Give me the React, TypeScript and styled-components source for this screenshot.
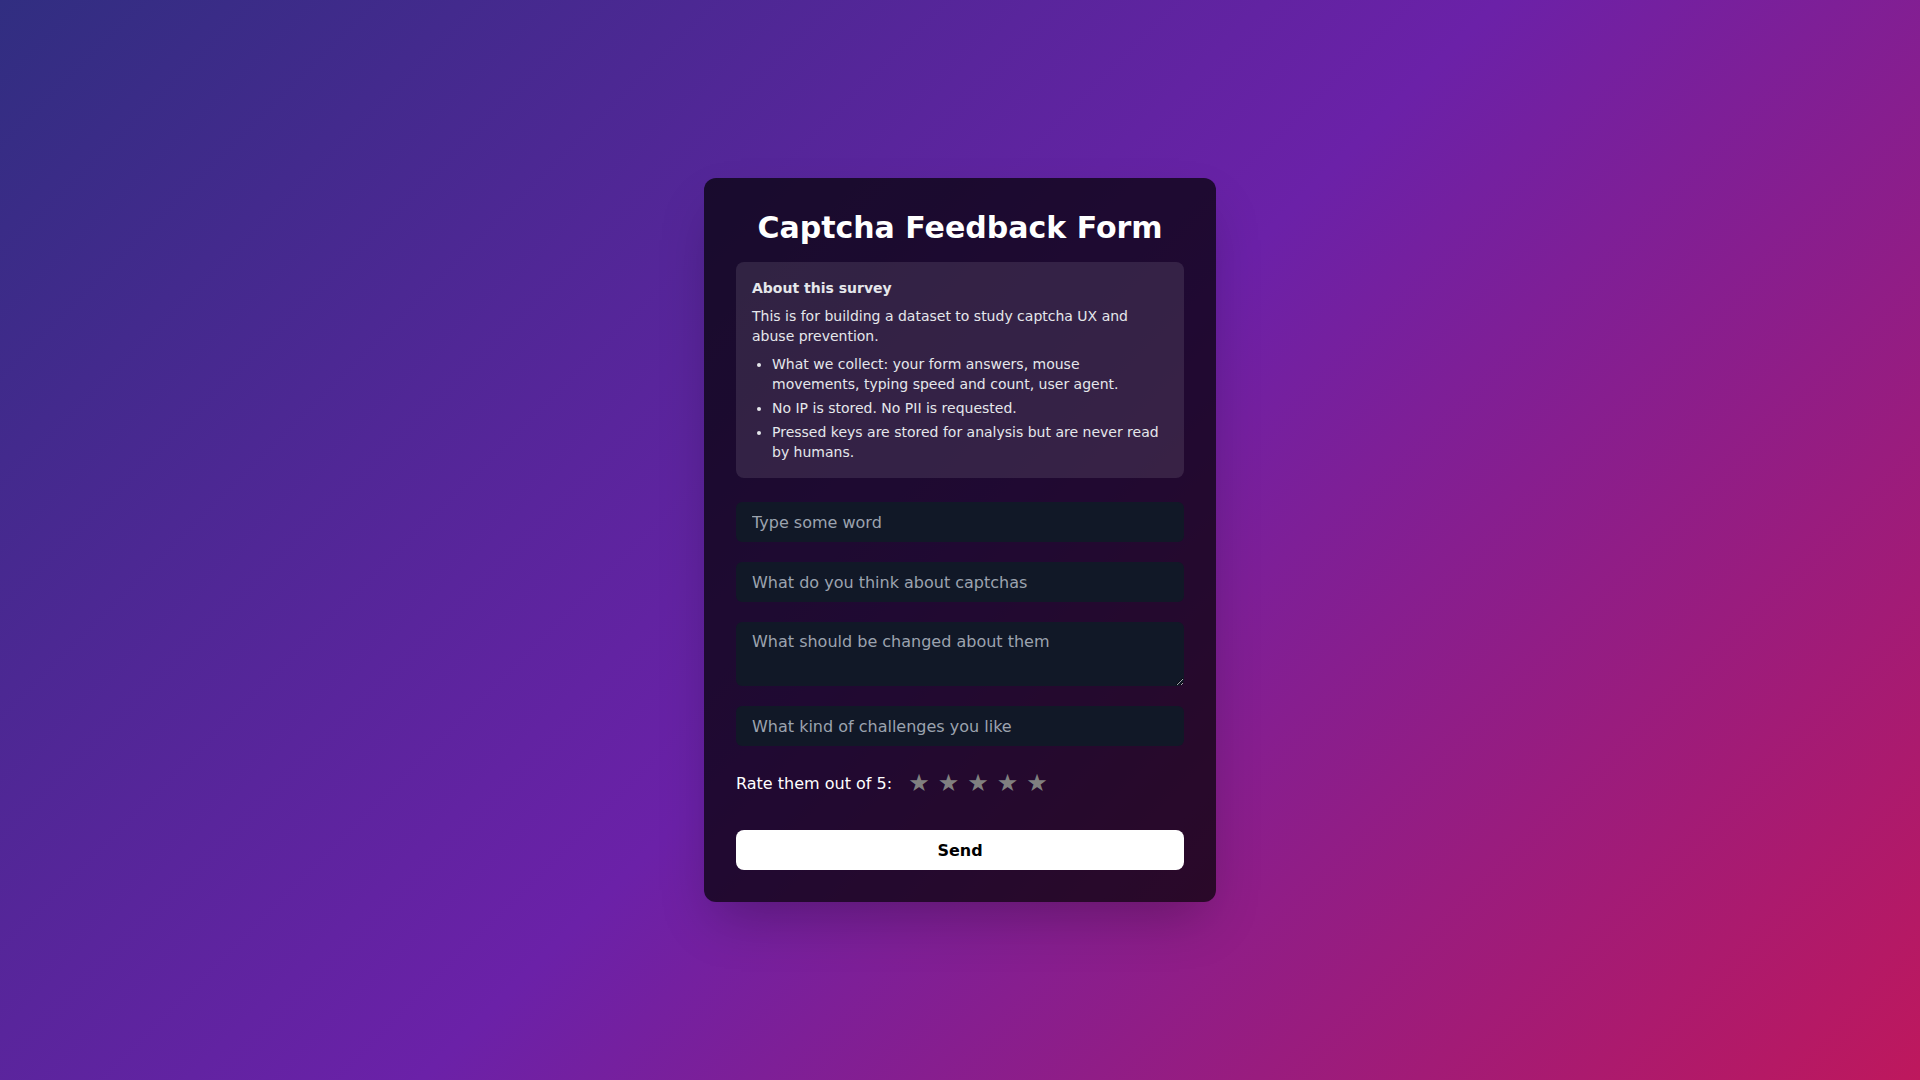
import React from "react";
import styled, { createGlobalStyle } from "styled-components";

const GlobalStyle = createGlobalStyle`
  * { box-sizing: border-box; }
  html, body { margin: 0; padding: 0; }
  body {
    font-family: "DejaVu Sans", "Noto Sans", sans-serif;
    min-height: 100vh;
    background: linear-gradient(135deg, #312e81 0%, #6b21a8 50%, #be185d 100%);
  }
`;

const Page = styled.main`
  min-height: 100vh;
  display: flex;
  align-items: center;
  justify-content: center;
`;

const Card = styled.section`
  width: 512px;
  padding: 32px;
  border-radius: 12px;
  background: rgba(0, 0, 0, 0.7);
  box-shadow: 0 25px 50px -12px rgba(0, 0, 0, 0.25);
  color: #ffffff;
`;

const Title = styled.h1`
  margin: 0 0 16px;
  font-size: 30px;
  line-height: 36px;
  font-weight: 700;
  text-align: center;
  color: #ffffff;
`;

const InfoBox = styled.div`
  background: rgba(255, 255, 255, 0.1);
  border-radius: 8px;
  padding: 16px;
  font-size: 14px;
  line-height: 20px;
  color: #e5e7eb;
  margin-bottom: 24px;
`;

const InfoHeading = styled.h2`
  margin: 0 0 8px;
  font-size: 14px;
  line-height: 20px;
  font-weight: 700;
`;

const InfoText = styled.p`
  margin: 0 0 8px;
`;

const InfoList = styled.ul`
  margin: 0;
  padding-left: 20px;
  list-style: disc;
  display: flex;
  flex-direction: column;
  gap: 4px;
`;

const Form = styled.form`
  display: flex;
  flex-direction: column;
  gap: 20px;
`;

const fieldCss = `
  width: 100%;
  border: none;
  outline: none;
  border-radius: 6px;
  background: #111827;
  color: #ffffff;
  font-family: "DejaVu Sans", "Noto Sans", sans-serif;
  font-size: 16px;
  line-height: 24px;
  padding: 8px 16px;
  &::placeholder { color: #9ca3af; opacity: 1; }
`;

const TextInput = styled.input`
  ${fieldCss}
  height: 40px;
  display: block;
`;

const TextArea = styled.textarea`
  ${fieldCss}
  display: block;
  height: 64px;
  resize: vertical;
`;

const RatingRow = styled.div`
  display: flex;
  align-items: center;
  min-height: 34px;
  font-size: 16px;
  color: #ffffff;
`;

const Stars = styled.div`
  display: flex;
  gap: 5.5px;
  margin-left: 15px;
`;

const Star = styled.button`
  width: 24px;
  border: none;
  background: none;
  padding: 0;
  text-align: center;
  font-family: "DejaVu Sans", sans-serif;
  font-size: 24px;
  line-height: 28px;
  color: #808080;
  cursor: pointer;
`;

const SendButton = styled.button`
  margin-top: 10px;
  height: 40px;
  width: 100%;
  border: none;
  border-radius: 8px;
  background: #ffffff;
  color: #000000;
  font-family: "DejaVu Sans", "Noto Sans", sans-serif;
  font-size: 16px;
  font-weight: 700;
  cursor: pointer;
`;

export default function App() {
  return (
    <>
      <GlobalStyle />
      <Page>
        <Card>
          <Title>Captcha Feedback Form</Title>
          <InfoBox>
            <InfoHeading>About this survey</InfoHeading>
            <InfoText>
              This is for building a dataset to study captcha UX and abuse prevention.
            </InfoText>
            <InfoList>
              <li>What we collect: your form answers, mouse movements, typing speed and count, user agent.</li>
              <li>No IP is stored. No PII is requested.</li>
              <li>Pressed keys are stored for analysis but are never read by humans.</li>
            </InfoList>
          </InfoBox>
          <Form onSubmit={(e) => e.preventDefault()}>
            <TextInput placeholder="Type some word" />
            <TextInput placeholder="What do you think about captchas" />
            <TextArea placeholder="What should be changed about them" />
            <TextInput placeholder="What kind of challenges you like" />
            <RatingRow>
              <span>Rate them out of 5:</span>
              <Stars>
                {[1, 2, 3, 4, 5].map((n) => (
                  <Star type="button" key={n} aria-label={`${n} stars`}>★</Star>
                ))}
              </Stars>
            </RatingRow>
            <SendButton type="submit">Send</SendButton>
          </Form>
        </Card>
      </Page>
    </>
  );
}
